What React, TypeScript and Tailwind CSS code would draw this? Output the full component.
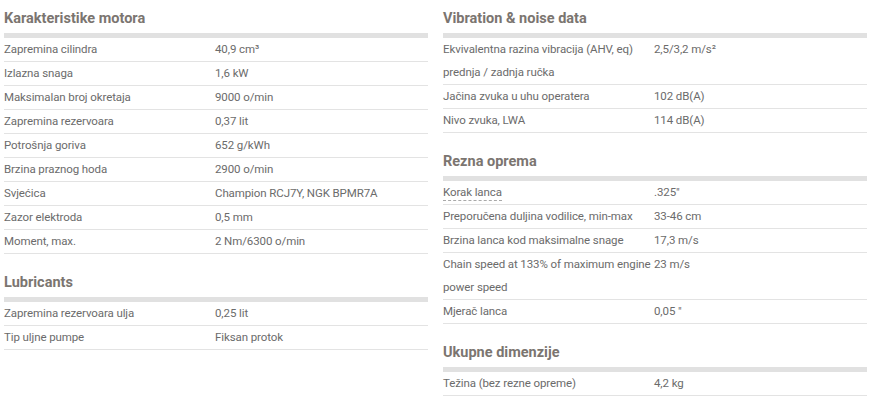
import React from 'react';

type Row = { label: string[]; value: string; dashed?: boolean };
type Section = { title: string; rows: Row[] };

const leftSections: Section[] = [
  {
    title: 'Karakteristike motora',
    rows: [
      { label: ['Zapremina cilindra'], value: '40,9 cm³' },
      { label: ['Izlazna snaga'], value: '1,6 kW' },
      { label: ['Maksimalan broj okretaja'], value: '9000 o/min' },
      { label: ['Zapremina rezervoara'], value: '0,37 lit' },
      { label: ['Potrošnja goriva'], value: '652 g/kWh' },
      { label: ['Brzina praznog hoda'], value: '2900 o/min' },
      { label: ['Svjećica'], value: 'Champion RCJ7Y, NGK BPMR7A' },
      { label: ['Zazor elektroda'], value: '0,5 mm' },
      { label: ['Moment, max.'], value: '2 Nm/6300 o/min' },
    ],
  },
  {
    title: 'Lubricants',
    rows: [
      { label: ['Zapremina rezervoara ulja'], value: '0,25 lit' },
      { label: ['Tip uljne pumpe'], value: 'Fiksan protok' },
    ],
  },
];

const rightSections: Section[] = [
  {
    title: 'Vibration & noise data',
    rows: [
      { label: ['Ekvivalentna razina vibracija (AHV, eq)', 'prednja / zadnja ručka'], value: '2,5/3,2 m/s²' },
      { label: ['Jačina zvuka u uhu operatera'], value: '102 dB(A)' },
      { label: ['Nivo zvuka, LWA'], value: '114 dB(A)' },
    ],
  },
  {
    title: 'Rezna oprema',
    rows: [
      { label: ['Korak lanca'], value: '.325"', dashed: true },
      { label: ['Preporučena duljina vodilice, min-max'], value: '33-46 cm' },
      { label: ['Brzina lanca kod maksimalne snage'], value: '17,3 m/s' },
      { label: ['Chain speed at 133% of maximum engine', 'power speed'], value: '23 m/s' },
      { label: ['Mjerač lanca'], value: '0,05 "' },
    ],
  },
  {
    title: 'Ukupne dimenzije',
    rows: [{ label: ['Težina (bez rezne opreme)'], value: '4,2 kg' }],
  },
];

const SpecSection: React.FC<{ section: Section }> = ({ section }) => (
  <div className="mb-[10px]">
    <h3 className="pt-[9px] pb-[4px] text-[14.5px] leading-[20px] font-bold text-[#7b7570]">{section.title}</h3>
    <div className="h-[5px] bg-[#e1e1e1]" />
    {section.rows.map((row) => (
      <div key={row.label[0]} className="grid grid-cols-[211px_1fr] border-b border-[#e3e3e3] text-[11.5px] leading-[23px] tracking-[-0.1px] text-[#6b6b6b]">
        <div className="whitespace-nowrap">
          {row.label.map((line, i) => (
            <div key={i}>
              {row.dashed ? (
                <span className="border-b border-dashed border-[#a9a9a9] pb-[1px]">{line}</span>
              ) : (
                line
              )}
            </div>
          ))}
        </div>
        <div className="whitespace-nowrap">{row.value}</div>
      </div>
    ))}
  </div>
);

export default function App() {
  return (
    <div className="min-h-[403px] w-[891px] bg-white pl-[4px] font-['Roboto',_'Liberation_Sans',_sans-serif]">
      <div className="grid grid-cols-[424px_424px] items-start gap-x-[15px]">
        <div>
          {leftSections.map((s) => (
            <SpecSection key={s.title} section={s} />
          ))}
        </div>
        <div>
          {rightSections.map((s) => (
            <SpecSection key={s.title} section={s} />
          ))}
        </div>
      </div>
    </div>
  );
}
